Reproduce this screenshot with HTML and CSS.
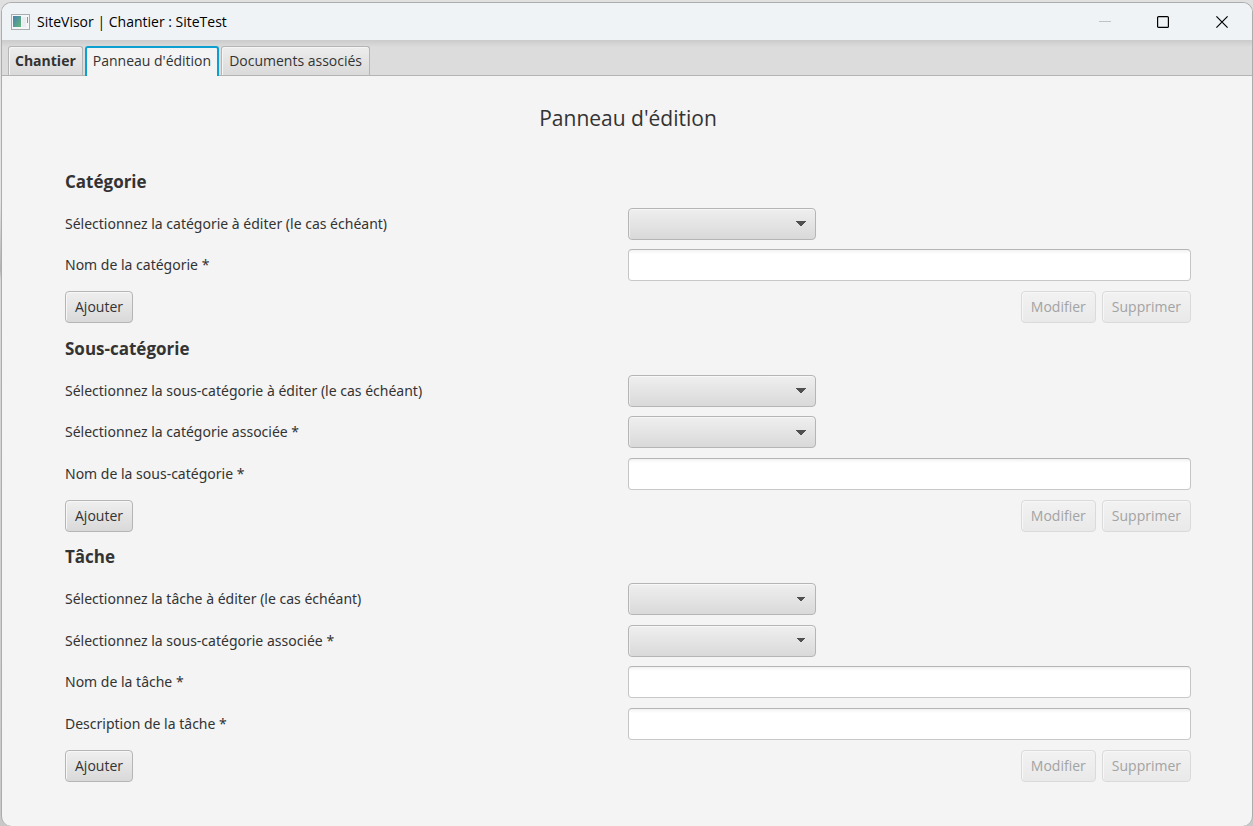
FILE: index.html
```html
<!DOCTYPE html>
<html lang="fr">
<head>
<meta charset="utf-8">
<title>SiteVisor | Chantier : SiteTest</title>
<link rel="stylesheet" href="styles.css">
</head>
<body>
<div class="window">
  <header class="titlebar">
    <svg class="app-icon" width="19" height="16" viewBox="0 0 19 16" aria-hidden="true">
      <defs><linearGradient id="g" x1="0" y1="0" x2="1" y2="1"><stop offset="0" stop-color="#4a7eae"/><stop offset="1" stop-color="#5fb878"/></linearGradient></defs>
      <rect x="0.5" y="0.5" width="18" height="15" fill="#f4f6f7" stroke="#a9adb0"/>
      <rect x="2" y="2" width="8" height="11" fill="url(#g)"/>
      <rect x="11" y="3" width="4" height="10" fill="#e9edef"/>
      <rect x="16" y="3" width="1" height="6" fill="#6f9fae"/>
    </svg>
    <span class="window-title">SiteVisor | Chantier : SiteTest</span>
    <div class="window-controls">
      <button class="window-button" aria-label="Réduire" disabled><svg width="12" height="12" viewBox="0 0 12 12"><path d="M0 5.500H12" stroke="#c0c3c5"/></svg></button>
      <button class="window-button" aria-label="Agrandir"><svg width="12" height="12" viewBox="0 0 12 12"><rect x="0.600" y="0.600" width="10.800" height="10.800" rx="1" fill="none" stroke="#000" stroke-width="1.200"/></svg></button>
      <button class="window-button" aria-label="Fermer"><svg width="12" height="12" viewBox="0 0 12 12"><path d="M.4.4 11.600 11.600M11.600.4.4 11.600" stroke="#000" stroke-width="1.200"/></svg></button>
    </div>
  </header>
  <nav class="tabs" role="tablist">
    <button class="tab tab-main" role="tab" aria-selected="false">Chantier</button>
    <button class="tab tab-active" role="tab" aria-selected="true">Panneau d'édition</button>
    <button class="tab" role="tab" aria-selected="false">Documents associés</button>
  </nav>
  <main class="panel">
    <h1 class="panel-title">Panneau d'édition</h1>
    <form class="form">
      <h2 class="section-title">Catégorie</h2>
      <div class="row"><label for="cat">Sélectionnez la catégorie à éditer (le cas échéant)</label><select class="combo" id="cat"></select></div>
      <div class="row"><label for="cat-name">Nom de la catégorie *</label><input class="field" id="cat-name" type="text"></div>
      <div class="actions"><button class="button add" type="button">Ajouter</button><button class="button" type="button" disabled>Modifier</button><button class="button" type="button" disabled>Supprimer</button></div>

      <h2 class="section-title">Sous-catégorie</h2>
      <div class="row"><label for="sub">Sélectionnez la sous-catégorie à éditer (le cas échéant)</label><select class="combo" id="sub"></select></div>
      <div class="row"><label for="sub-cat">Sélectionnez la catégorie associée *</label><select class="combo" id="sub-cat"></select></div>
      <div class="row"><label for="sub-name">Nom de la sous-catégorie *</label><input class="field" id="sub-name" type="text"></div>
      <div class="actions"><button class="button add" type="button">Ajouter</button><button class="button" type="button" disabled>Modifier</button><button class="button" type="button" disabled>Supprimer</button></div>

      <h2 class="section-title">Tâche</h2>
      <div class="row"><label for="task">Sélectionnez la tâche à éditer (le cas échéant)</label><select class="combo" id="task"></select></div>
      <div class="row"><label for="task-sub">Sélectionnez la sous-catégorie associée *</label><select class="combo" id="task-sub"></select></div>
      <div class="row"><label for="task-name">Nom de la tâche *</label><input class="field" id="task-name" type="text"></div>
      <div class="row"><label for="task-desc">Description de la tâche *</label><input class="field" id="task-desc" type="text"></div>
      <div class="actions"><button class="button add" type="button">Ajouter</button><button class="button" type="button" disabled>Modifier</button><button class="button" type="button" disabled>Supprimer</button></div>
    </form>
  </main>
</div>
</body>
</html>
```
FILE: styles.css
```css
* { box-sizing: border-box; }

body {
  display: flex;
  min-height: 100vh;
  margin: 0;
  padding: 2px 0 0 1px;
  background: linear-gradient(#e0e0e0, #e4e4e4 200px, #b4b4b4 270px, #d8d8d8 280px, #c8c8c8);
  color: #333;
  font: 14px/20px "Open Sans", "Noto Sans", sans-serif;
}

button, input, select { font: inherit; color: inherit; }

.window {
  display: flex;
  flex-direction: column;
  flex: 1;
  overflow: hidden;
  border: 1px solid #adadad;
  border-bottom: 0;
  border-radius: 10px;
  background: #f4f4f4;
}

.titlebar {
  display: flex;
  align-items: center;
  height: 37px;
  padding-left: 9px;
  background: #eff3f6;
  color: #000;
}

.window-title { margin-left: 7px; }

.window-controls { display: flex; margin-left: auto; }

.window-button {
  display: grid;
  place-items: center;
  width: 58px;
  height: 36px;
  padding: 0;
  border: 0;
  background: none;
}

.window-button:last-child { width: 60px; }

.tabs {
  display: flex;
  align-items: flex-end;
  gap: 2px;
  height: 36px;
  padding: 0 6px;
  border-bottom: 1px solid #b4b4b4;
  background: linear-gradient(#cbcbcb, #dcdcdc 7px);
}

.tab {
  height: 29px;
  padding: 0 7px;
  border: 1px solid #b5b5b5;
  border-bottom: 0;
  border-radius: 3px 3px 0 0;
  background: linear-gradient(#ededed, #dadada);
  box-shadow: inset 1px 1px #f5f5f5;
  white-space: nowrap;
}

.tab-main { padding: 0 6px; font-weight: 700; }

.tab-active {
  height: 30px;
  margin-bottom: -1px;
  padding: 0 6px 2px;
  border: 2px solid #0c9fd0;
  border-width: 2px 2px 0;
  background: #f4f4f4;
  box-shadow: none;
}

.panel {
  display: flex;
  flex-direction: column;
  flex: 1;
  padding: 26px 61px 44px 63px;
}

.panel-title {
  margin: 0;
  font-size: 21px;
  font-weight: 400;
  line-height: 32px;
  text-align: center;
}

.form {
  display: flex;
  flex-direction: column;
  flex: 1;
  justify-content: space-between;
  padding-top: 32px;
}

.section-title {
  margin: 0;
  font-size: 17px;
  font-weight: 700;
  line-height: 32px;
}

.row {
  display: grid;
  grid-template-columns: 1fr 1fr;
  align-items: center;
  font-family: "Noto Sans", "Open Sans", sans-serif;
}

.combo, .field, .button {
  height: 32px;
  border: 1px solid #b5b5b5;
  border-radius: 4px;
}

.combo {
  width: 188px;
  appearance: none;
  background:
    conic-gradient(from -45deg at 50% 100%, #505050 90deg, transparent 0) right 9px center / 10px 5px no-repeat,
    linear-gradient(#efefef, #d9d9d9);
  box-shadow: inset 0 1px #f7f7f7, inset 1px 0 #eee;
}

.field {
  width: 100%;
  padding: 0 8px;
  border-color: #b5b5b5 #c5c5c5 #c8c8c8;
  background: linear-gradient(#f2f2f2, #fff 4px);
}

.actions { display: flex; gap: 6px; }

.button {
  padding: 0 9px;
  background: linear-gradient(#efefef, #d9d9d9);
  box-shadow: inset 1px 1px #f7f7f7;
}

.button:disabled {
  border-color: #dadada;
  background: linear-gradient(#f2f2f2, #e9e9e9);
  color: #a3a3a3;
}

.add { margin-right: auto; }
```
